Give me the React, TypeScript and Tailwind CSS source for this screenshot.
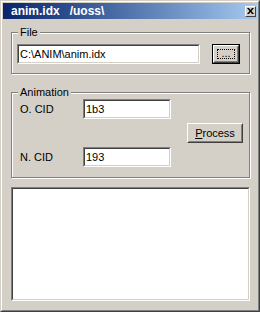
import React from "react";

const raised =
    "border border-t-white border-l-white border-r-[#404040] border-b-[#404040]";
const raisedInner =
    "border border-t-[#d4d0c8] border-l-[#d4d0c8] border-r-[#808080] border-b-[#808080]";

const SunkenInput = ({ value, width }: { value: string; width: string }) => {
    return (
        <div
            className={`${width} h-[20px] border border-t-[#808080] border-l-[#808080] border-r-white border-b-white`}
        >
            <div className="h-full border border-t-[#404040] border-l-[#404040] border-r-[#d4d0c8] border-b-[#d4d0c8] bg-white pl-[1px] leading-[16px]">
                {value}
            </div>
        </div>
    );
};

const GroupBox = ({
    label,
    height,
    className,
    children,
}: {
    label: string;
    height: string;
    className?: string;
    children: React.ReactNode;
}) => {
    return (
        <div
            className={`relative ml-[8px] w-[239px] ${height} border border-[#808080] shadow-[inset_1px_1px_0_#ffffff,1px_1px_0_#ffffff] ${className ?? ""}`}
        >
            <span className="absolute left-[6px] top-[-8px] bg-[#d4d0c8] px-[2px] leading-[14px]">
                {label}
            </span>
            {children}
        </div>
    );
};

function App() {
    return (
        <div className="w-[260px] h-[312px] font-['Liberation_Sans',Arial,sans-serif] text-[11px] text-black">
            <div className="w-full h-full border border-t-[#d4d0c8] border-l-[#d4d0c8] border-r-[#404040] border-b-[#404040] bg-[#d4d0c8]">
                <div className="w-full h-full border border-t-white border-l-white border-r-[#808080] border-b-[#808080] p-[1px]">
                    {/* title bar */}
                    <div className="h-[16px] flex items-center bg-gradient-to-r from-[#0a246a] to-[#a6caf0] pl-[8px] pr-[1px]">
                        <span className="flex-1 whitespace-pre font-bold text-[12px] leading-[16px] text-white">
                            {"anim.idx   /uoss\\"}
                        </span>
                        <div className={`w-[11px] h-[11px] ${raised} bg-[#d4d0c8] flex items-center justify-center`}>
                            <svg width="7" height="6" viewBox="0 0 7 6">
                                <path d="M0 0h2l1.5 2L5 0h2L4.5 3L7 6H5L3.5 4L2 6H0l2.5-3z" fill="#000" />
                            </svg>
                        </div>
                    </div>

                    {/* client */}
                    <div className="pt-[13px]">
                        <GroupBox label="File" height="h-[42px]">
                            <div className="flex items-start pl-[5px] pt-[11px]">
                                <SunkenInput value="C:\ANIM\anim.idx" width="w-[183px]" />
                                <div className="ml-[12px] w-[28px] h-[20px] border border-black">
                                    <div className={`h-full ${raised}`}>
                                        <div className={`h-full ${raisedInner} p-[2px]`}>
                                            <div className="h-full border border-dotted border-black flex items-end justify-center leading-[10px]">
                                                ...
                                            </div>
                                        </div>
                                    </div>
                                </div>
                            </div>
                        </GroupBox>

                        <GroupBox label="Animation" height="h-[86px]" className="mt-[18px]">
                            <div className="flex items-center pl-[8px] pt-[6px]">
                                <div className="flex flex-col gap-[28px]">
                                    <div className="flex items-center">
                                        <span className="w-[63px]">O. CID</span>
                                        <SunkenInput value="1b3" width="w-[88px]" />
                                    </div>
                                    <div className="flex items-center">
                                        <span className="w-[63px]">N. CID</span>
                                        <SunkenInput value="193" width="w-[88px]" />
                                    </div>
                                </div>
                                <div className={`ml-[16px] w-[56px] h-[20px] ${raised}`}>
                                    <div className={`h-full ${raisedInner} flex items-center justify-center leading-[14px]`}>
                                        <span>
                                            <span className="underline">P</span>rocess
                                        </span>
                                    </div>
                                </div>
                            </div>
                        </GroupBox>

                        <div className="mt-[9px] ml-[8px] w-[239px] h-[114px] border border-t-[#808080] border-l-[#808080] border-r-white border-b-white">
                            <div className="h-full border border-t-[#404040] border-l-[#404040] border-r-[#d4d0c8] border-b-[#d4d0c8] bg-white" />
                        </div>
                    </div>
                </div>
            </div>
        </div>
    );
}

export default App;
